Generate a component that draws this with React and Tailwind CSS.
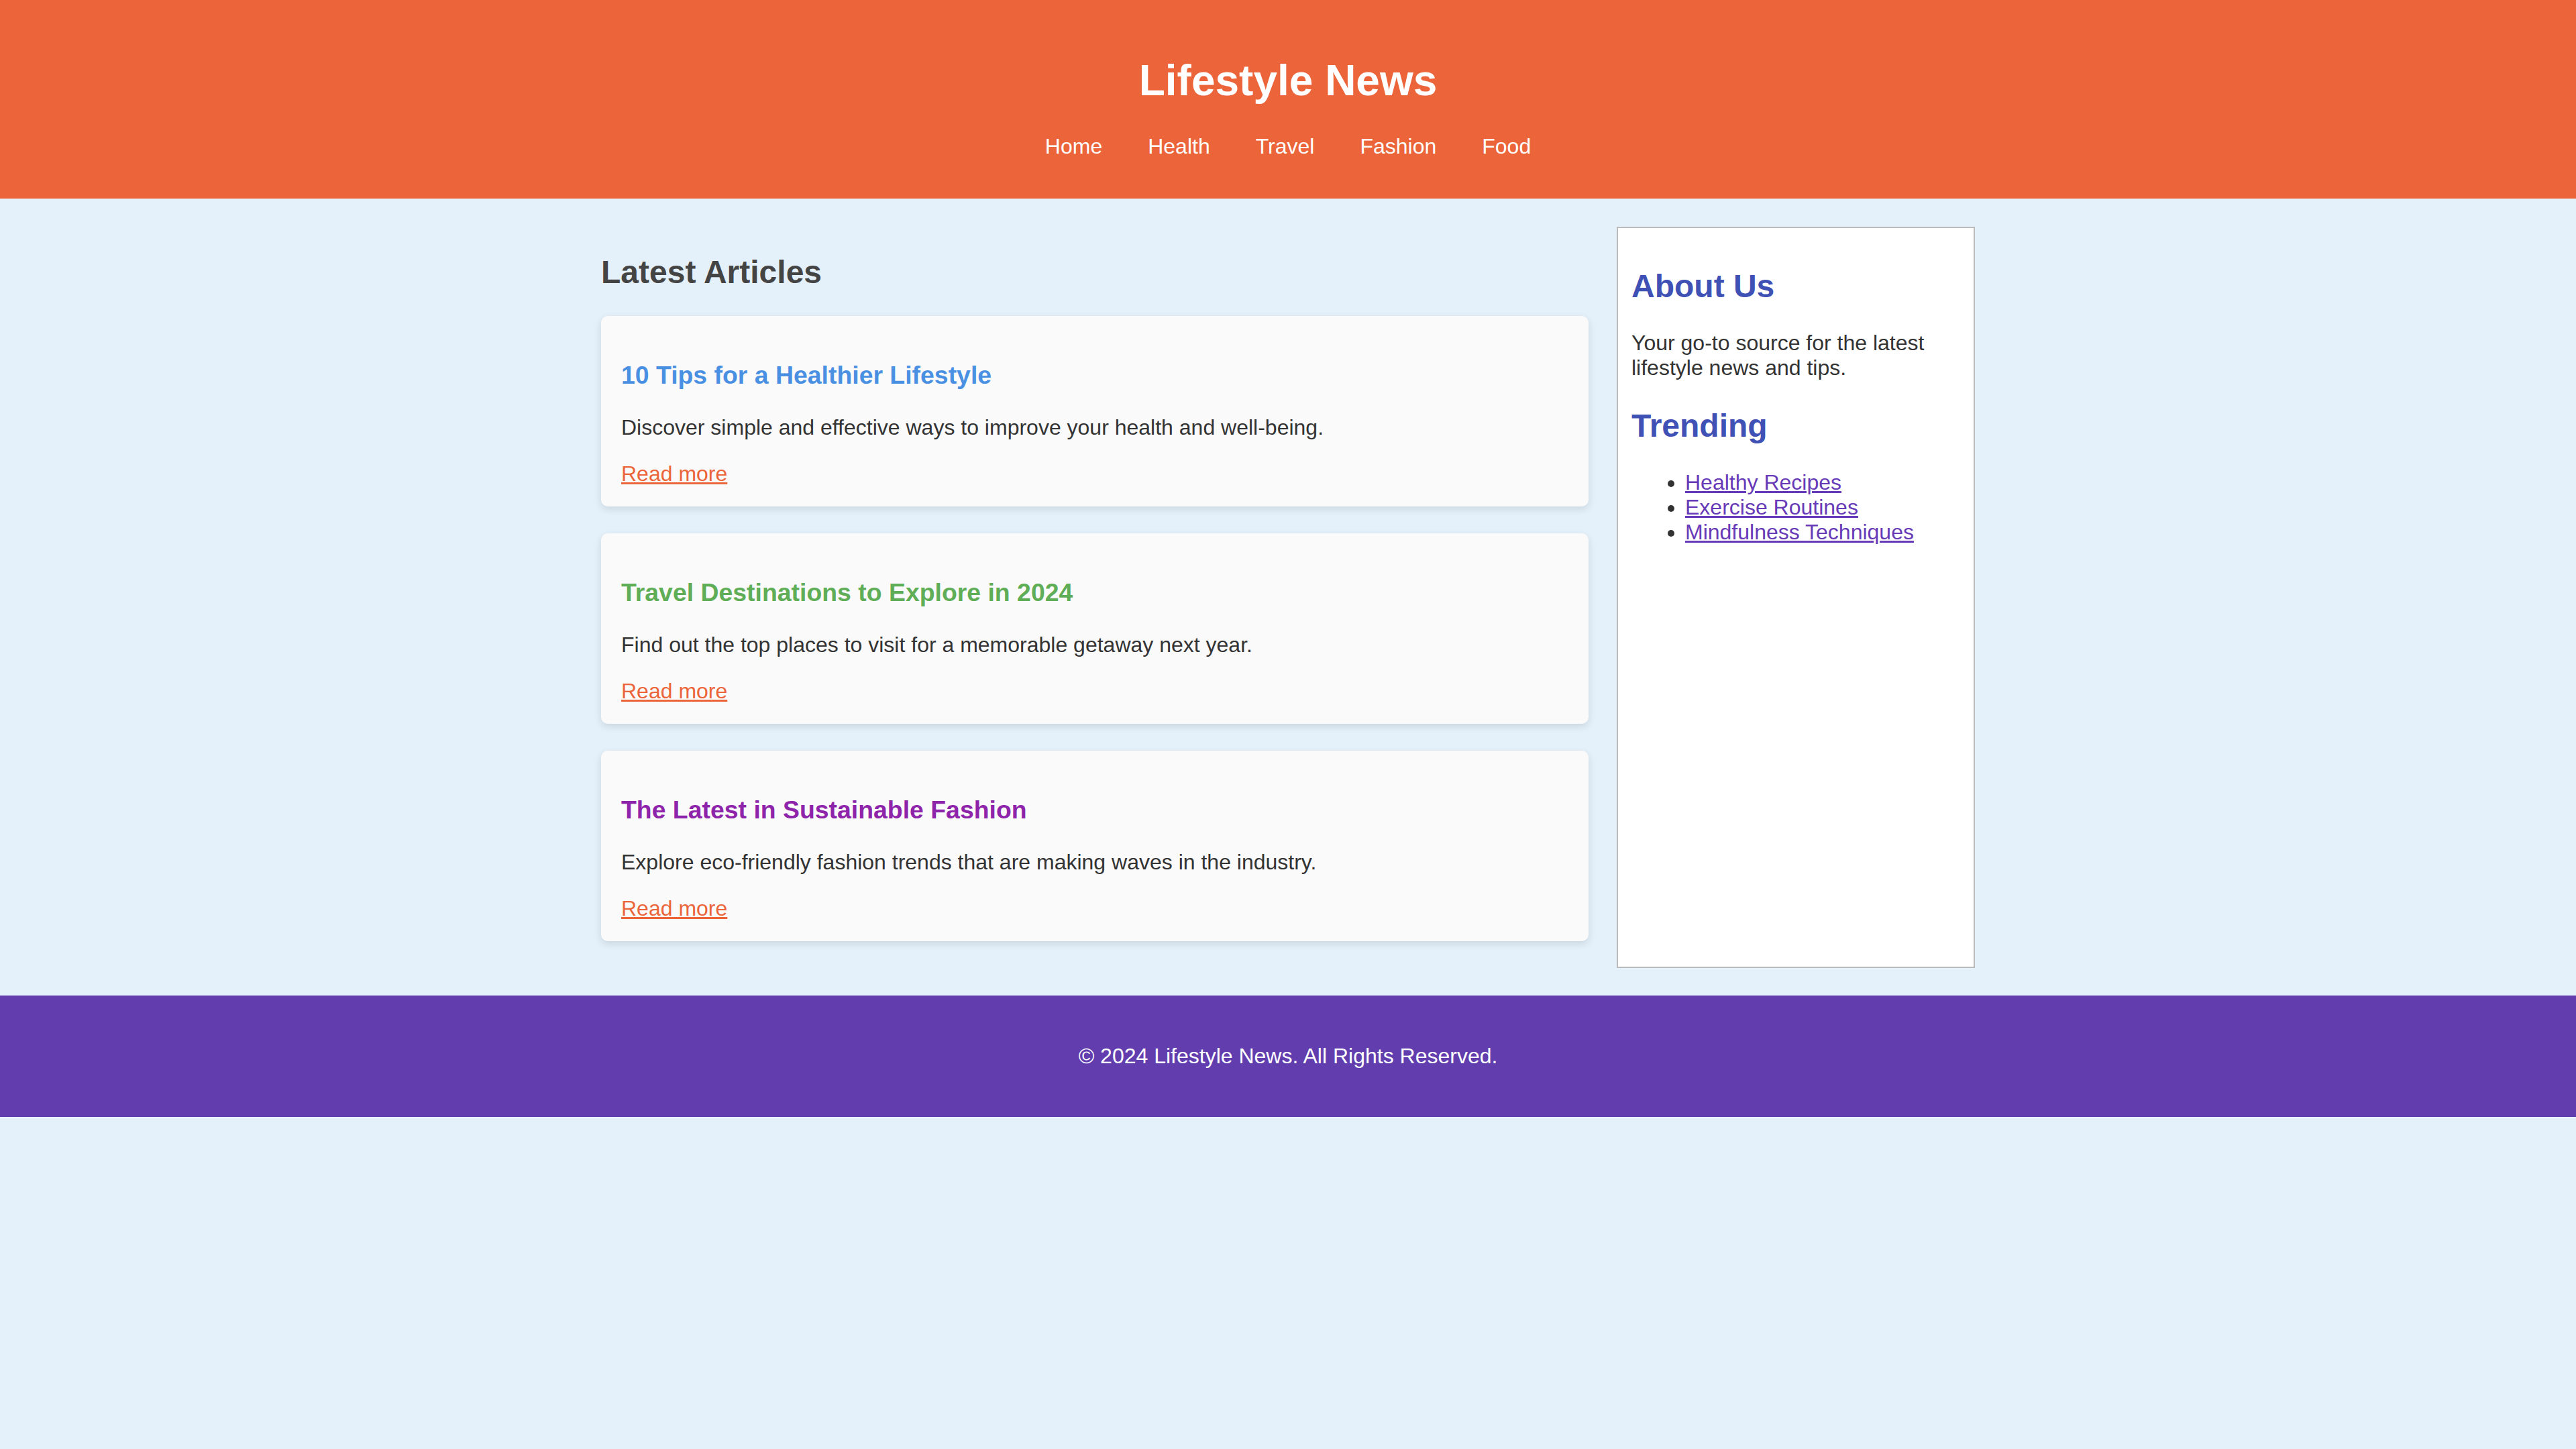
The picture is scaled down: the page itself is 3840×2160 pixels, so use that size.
import React from 'react';

const articles = [
    {
        title: '10 Tips for a Healthier Lifestyle',
        text: 'Discover simple and effective ways to improve your health and well-being.',
        color: 'text-[#4a90e2]',
    },
    {
        title: 'Travel Destinations to Explore in 2024',
        text: 'Find out the top places to visit for a memorable getaway next year.',
        color: 'text-[#5fad56]',
    },
    {
        title: 'The Latest in Sustainable Fashion',
        text: 'Explore eco-friendly fashion trends that are making waves in the industry.',
        color: 'text-[#8e24aa]',
    },
];

const navItems = ['Home', 'Health', 'Travel', 'Fashion', 'Food'];
const trending = ['Healthy Recipes', 'Exercise Routines', 'Mindfulness Techniques'];

const ArticleCard = ({ article }) => (
    <article className="mb-[40px] rounded-[10px] bg-[#fafafa] p-[30px] shadow-[0_4px_12px_rgba(0,0,0,0.12)]">
        <h3 className={`mt-[37px] text-[37.4px] leading-[43px] font-bold ${article.color}`}>
            {article.title}
        </h3>
        <p className="mt-[38px] text-[32px] leading-[37px]">{article.text}</p>
        <div className="mt-[32px] text-[32px] leading-[37px]">
            <a href="#" className="text-[#ec6439] underline decoration-[3px]">Read more</a>
        </div>
    </article>
);

export default function App() {
    return (
        <div className="min-h-screen bg-[#e4f1fb] font-['Liberation_Sans',Arial,sans-serif] text-[#333]">
            {/* Header */}
            <header className="bg-[#ec6439] py-[40px] text-center text-white">
                <h1 className="mt-[44px] text-[64px] leading-[73px] font-bold">Lifestyle News</h1>
                <nav className="mt-[43px] mb-[19px] flex justify-center gap-[68px] text-[32px] leading-[37px]">
                    {navItems.map((item) => (
                        <a key={item} href="#" className="text-white">{item}</a>
                    ))}
                </nav>
            </header>

            {/* Main */}
            <main className="mx-auto flex w-[2048px] gap-[42px] pt-[42px] pb-[41px]">
                <section className="w-[1472px]">
                    <h2 className="mt-[40px] mb-[38px] text-[48px] leading-[55px] font-bold text-[#444]">
                        Latest Articles
                    </h2>
                    {articles.map((a) => (
                        <ArticleCard key={a.title} article={a} />
                    ))}
                </section>

                <aside className="w-[534px] border-2 border-[#bbbbbb] bg-white px-[20px] pt-[19px]">
                    <h2 className="mt-[40px] text-[48px] leading-[55px] font-bold text-[#3f51b5]">About Us</h2>
                    <p className="mt-[39px] text-[32px] leading-[37px]">
                        Your go-to source for the latest lifestyle news and tips.
                    </p>
                    <h2 className="mt-[40px] text-[48px] leading-[55px] font-bold text-[#3f51b5]">Trending</h2>
                    <ul className="mt-[39px] list-disc pl-[80px] text-[32px] leading-[37px]">
                        {trending.map((t) => (
                            <li key={t}>
                                <a href="#" className="text-[#673ab7] underline decoration-[3px]">{t}</a>
                            </li>
                        ))}
                    </ul>
                </aside>
            </main>

            {/* Footer */}
            <footer className="bg-[#623dae] py-[72px] text-center text-[32px] leading-[37px] text-white">
                <p>&copy; 2024 Lifestyle News. All Rights Reserved.</p>
            </footer>
        </div>
    );
}
